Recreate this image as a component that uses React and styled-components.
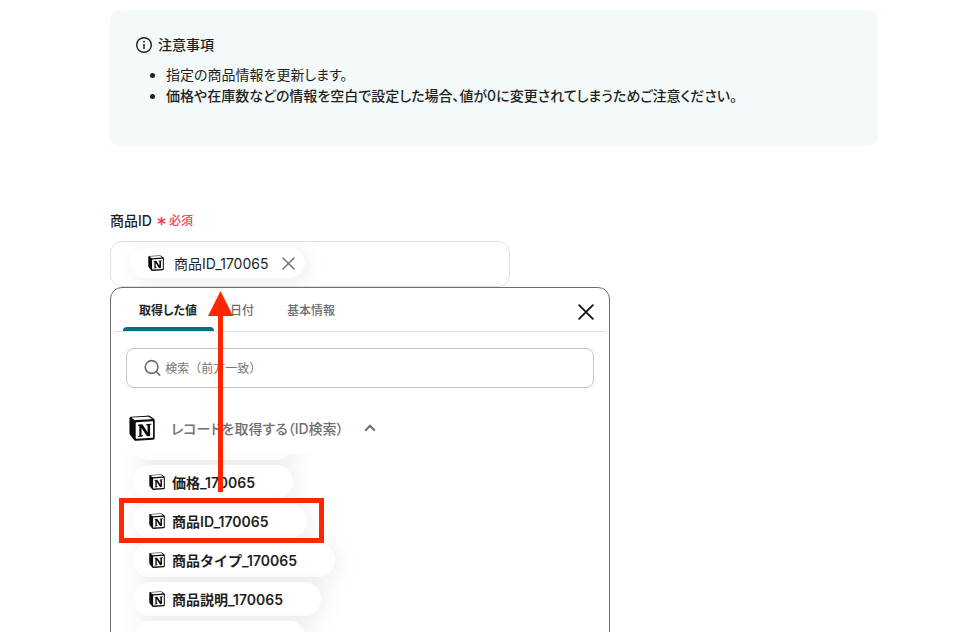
import { useState } from "react";
import styled, { createGlobalStyle } from "styled-components";

const GlobalStyle = createGlobalStyle`
  * {
    box-sizing: border-box;
  }

  body {
    margin: 0;
    background-color: white;
    color: #1f1f1f;
    font-family: Inter, "Noto Sans CJK JP", sans-serif;
    font-size: 14px;
    line-height: 21px;
    font-feature-settings: "palt";
  }

  button,
  input {
    font: inherit;
    font-feature-settings: inherit;
    color: inherit;
  }
`;

const Page = styled.main`
  height: 100vh;
  padding: 10px 100px 0 110px;
  overflow: hidden;
`;

const Notice = styled.section`
  min-height: 136px;
  padding: 24px 26px;
  background-color: #f4fafa;
  border-radius: 10px;
`;

const NoticeTitle = styled.h2`
  margin: 0;
  display: flex;
  align-items: center;
  gap: 6px;
  font-size: 14px;
  font-weight: 500;
`;

const NoticeList = styled.ul`
  margin: 9px 0 0;
  padding-left: 30px;
`;

const NoticeItem = styled.li`
  font-weight: ${(props) => (props.$strong ? 500 : 400)};
`;

const FieldLabel = styled.div`
  margin-top: 64px;
  display: flex;
  align-items: center;
  gap: 5px;
  font-weight: 500;
`;

const Required = styled.span`
  display: flex;
  align-items: center;
  gap: 3px;
  color: #ff3b53;
  font-size: 12px;
`;

const Field = styled.div`
  max-width: 400px;
  height: 46px;
  margin-top: 10px;
  padding: 0 19px 2px;
  display: flex;
  align-items: center;
  border: 1px solid #e0e0e0;
  border-radius: 12px;
  overflow: hidden;
`;

const Chip = styled.div`
  height: 30px;
  padding: 0 10px 0 18px;
  display: flex;
  align-items: center;
  gap: 10px;
  background-color: white;
  border-radius: 15px;
  box-shadow: 4px 4px 20px rgba(0, 0, 0, 0.08);
`;

const IconButton = styled.button`
  padding: 0;
  display: flex;
  background: none;
  border: none;
  cursor: pointer;
`;

const RemoveButton = styled(IconButton)`
  margin-left: 4px;
`;

const Panel = styled.div`
  position: relative;
  max-width: 500px;
  height: 420px;
  border: 1px solid #6e6e6e;
  border-radius: 12px;
`;

const TabBar = styled.div`
  margin: 0 3px;
  padding: 0 12px 0 9px;
  display: flex;
  align-items: center;
  border-bottom: 1px solid #e0e0e0;
`;

const Tab = styled.button`
  height: 43px;
  padding: 2px 17px 0 16px;
  background: none;
  border: none;
  border-radius: 0;
  position: relative;
  color: ${(props) => (props.$active ? "#1f1f1f" : "#6e6e6e")};
  font-size: 12px;
  font-weight: ${(props) => (props.$active ? 700 : 500)};
  cursor: pointer;

  &::after {
    content: "";
    position: absolute;
    left: 0;
    right: 0;
    bottom: 0;
    height: 4px;
    border-radius: 4px 4px 0 0;
    background-color: ${(props) => (props.$active ? "#066e85" : "transparent")};
  }
`;

const CloseButton = styled(IconButton)`
  margin: 5px 0 0 auto;
`;

const SearchBox = styled.label`
  height: 40px;
  margin: 16px 15px 0;
  padding: 0 17px;
  display: flex;
  align-items: center;
  gap: 4px;
  border: 1px solid #c4c4c4;
  border-radius: 8px;
`;

const SearchInput = styled.input`
  width: 100%;
  padding: 0;
  background: none;
  border: none;
  outline: none;
  font-size: 12px;
  font-feature-settings: normal;

  &::placeholder {
    color: #757575;
    opacity: 1;
  }
`;

const GroupButton = styled.button`
  margin: 27px 0 0 18px;
  padding: 0;
  display: flex;
  align-items: center;
  background: none;
  border: none;
  color: #6e6e6e;
  font-weight: 500;
  cursor: pointer;
`;

const GroupName = styled.span`
  margin: 0 20px 0 16px;
`;

const ListViewport = styled.div`
  height: 240px;
  margin: 13px 8px 0;
  overflow: hidden;
`;

const ValueList = styled.ul`
  margin: -28px 0 0;
  padding: 0 0 0 14px;
  list-style: none;
  display: flex;
  flex-direction: column;
  align-items: flex-start;
  gap: 5px;
`;

const Value = styled.button`
  height: 34px;
  min-width: ${(props) => props.$minWidth || 0}px;
  padding: 0 38px 0 16px;
  display: flex;
  align-items: center;
  gap: 7px;
  background-color: white;
  border: none;
  border-radius: 17px;
  box-shadow: 4px 4px 24px rgba(0, 0, 0, 0.08);
  font-weight: 600;
  font-feature-settings: normal;
  white-space: nowrap;
  cursor: pointer;
`;

const Arrow = styled.svg`
  position: absolute;
  top: 3px;
  left: 97px;
  pointer-events: none;
`;

const Highlight = styled.div`
  position: absolute;
  top: 210px;
  left: 8px;
  width: 205px;
  height: 45px;
  border: 5px solid #ff2600;
  pointer-events: none;
`;

function NotionIcon({ size }) {
  return (
    <svg width={size} height={size} viewBox="0 0 28 28" aria-hidden="true">
      <path
        d="M2.2 1.8 19.5.7c2-.1 2.600 0 3.800.9l3.200 2.300c.9.600 1.200.9 1.200 1.700v19c0 1.300-.5 2-2 2.100L7.800 27.800c-1.200.1-1.800-.1-2.400-.9L1.500 21.800C.8 20.900.5 20.200.5 19.300V3.700c0-1 .5-1.800 1.700-1.900Z"
        fill="#0a0a0a"
      />
      <path d="M3.300 2.800 19.700 1.900c1.100-.1 1.500 0 2.200.5l2.300 1.600c.4.300.2.5-.3.500L7.500 5.500c-1 .1-1.500-.1-2.200-.6L3 3.200c-.2-.2-.1-.4.3-.4Z" fill="#fff" />
      <path d="M8.200 7.700 25 6.700c.6 0 .9.300.9.800v16.200c0 .6-.3.900-.9.900L8.200 25.500c-.7 0-1-.3-1-.9V8.700c0-.6.300-1 1-1Z" fill="#fff" />
      <path
        d="M10 10.300 14.400 10l5.600 8.500v-7.100l-1.600-.3c0-1 .7-1.500 1.600-1.500l4.200-.2v.8l-1.500.4v11.800c-.8.5-1.500.6-2.200.6-.9 0-1.300-.3-1.900-1.100l-5.100-8v7.600l1.700.4c0 1-.8 1.400-1.700 1.400l-3.900.2c-.1-.5.1-.8.5-.9l1-.3V12l-1.300-.1c-.1-.9.200-1.500.2-1.600Z"
        fill="#0a0a0a"
      />
    </svg>
  );
}

function CrossIcon({ size, color, width }) {
  return (
    <svg width={size} height={size} viewBox="0 0 14 14" aria-hidden="true">
      <path d="M1 1 13 13M13 1 1 13" fill="none" stroke={color} strokeWidth={width} strokeLinecap="round" />
    </svg>
  );
}

const tabs = ["取得した値", "日付", "基本情報"];
const values = ["価格_170065", "商品ID_170065", "商品タイプ_170065", "商品説明_170065"];

function App() {
  const [tab, setTab] = useState(tabs[0]);

  return (
    <>
      <GlobalStyle />
      <Page>
        <Notice>
          <NoticeTitle>
            <svg width="16" height="16" viewBox="0 0 16 16" aria-hidden="true">
              <circle cx="8" cy="8" r="7.300" fill="none" stroke="#1f1f1f" strokeWidth="1.400" />
              <path d="M8 7v5" stroke="#1f1f1f" strokeWidth="1.500" />
              <circle cx="8" cy="4.700" r="0.900" fill="#1f1f1f" />
            </svg>
            注意事項
          </NoticeTitle>
          <NoticeList>
            <NoticeItem>指定の商品情報を更新します。</NoticeItem>
            <NoticeItem $strong>価格や在庫数などの情報を空白で設定した場合、値が0に変更されてしまうためご注意ください。</NoticeItem>
          </NoticeList>
        </Notice>

        <FieldLabel>
          商品ID
          <Required>
            <svg width="9" height="10" viewBox="0 0 9 10" aria-hidden="true">
              <path d="M4.500.7v8.600M.8 2.900l7.400 4.200M8.200 2.900.8 7.100" stroke="#ff3b53" strokeWidth="1.500" />
            </svg>
            必須
          </Required>
        </FieldLabel>
        <Field>
          <Chip>
            <NotionIcon size={16} />
            商品ID_170065
            <RemoveButton type="button">
              <CrossIcon size={13} color="#6e6e6e" width={1.5} />
            </RemoveButton>
          </Chip>
        </Field>

        <Panel>
          <TabBar>
            {tabs.map((name) => (
              <Tab key={name} type="button" $active={name === tab} onClick={() => setTab(name)}>
                {name}
              </Tab>
            ))}
            <CloseButton type="button">
              <CrossIcon size={16} color="#111" width={1.6} />
            </CloseButton>
          </TabBar>

          <SearchBox>
            <svg width="18" height="18" viewBox="0 0 18 18" aria-hidden="true">
              <circle cx="8" cy="8" r="6.700" fill="none" stroke="#6e6e6e" strokeWidth="1.700" />
              <path d="m12.700 12.700 3.800 3.800" stroke="#6e6e6e" strokeWidth="1.700" strokeLinecap="round" />
            </svg>
            <SearchInput type="text" placeholder="検索（前方一致）" />
          </SearchBox>

          <GroupButton type="button">
            <NotionIcon size={26} />
            <GroupName>レコードを取得する（ID検索）</GroupName>
            <svg width="12" height="8" viewBox="0 0 12 8" aria-hidden="true">
              <path d="m1.200 6.800 4.800-5 4.800 5" fill="none" stroke="#6e6e6e" strokeWidth="2" />
            </svg>
          </GroupButton>

          <ListViewport>
            <ValueList>
              <li>
                <Value type="button" $minWidth={160} />
              </li>
              {values.map((value) => (
                <li key={value}>
                  <Value type="button">
                    <NotionIcon size={16} />
                    {value}
                  </Value>
                </li>
              ))}
              <li>
                <Value type="button" $minWidth={173} />
              </li>
            </ValueList>
          </ListViewport>

          <Arrow width="25" height="202" viewBox="0 0 25 202" aria-hidden="true">
            <path d="M12.500 0 25 25h-10v176h-5V25H0Z" fill="#ff2600" />
          </Arrow>
          <Highlight />
        </Panel>
      </Page>
    </>
  );
}

export default App;
